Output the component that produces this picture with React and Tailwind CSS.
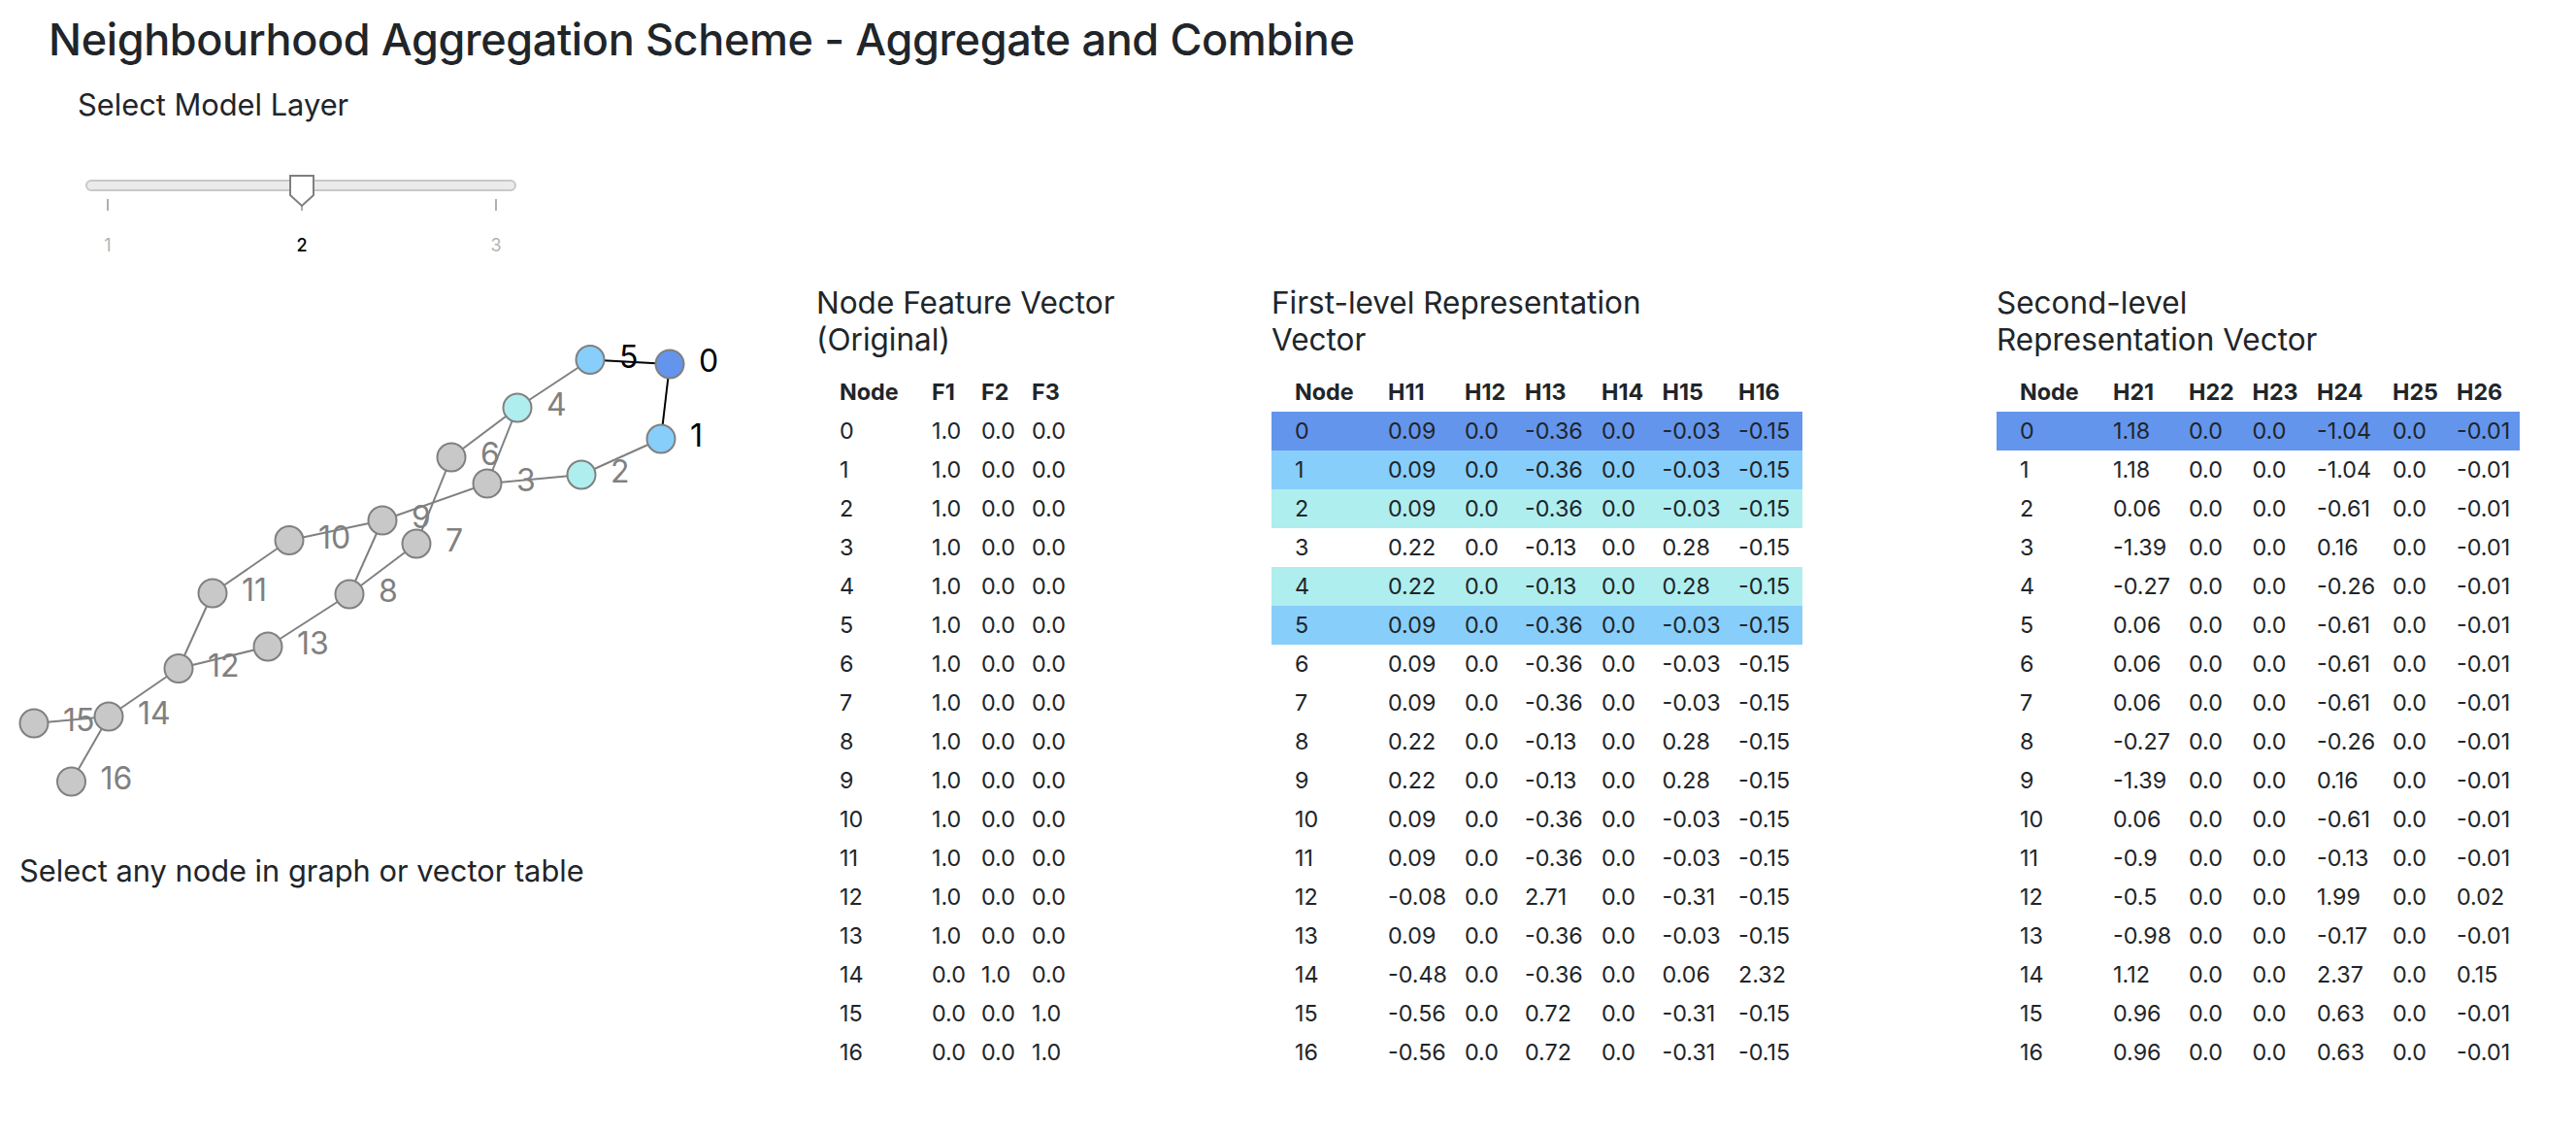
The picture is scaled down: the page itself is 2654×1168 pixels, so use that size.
const nodes = [
  [690, 375, "#6495ed"], [681, 452, "#87cefa"], [599, 489, "#afeeee"], [502, 498], [533, 420, "#afeeee"],
  [608, 370.5, "#87cefa"], [465, 471], [429, 560], [360, 612], [394, 536], [298, 556.5],
  [219, 611], [184, 688.5], [276, 666], [112, 738], [35, 745], [73.5, 805],
];

const edges = [
  [1, 2], [2, 3], [3, 9], [9, 10], [10, 11], [11, 12], [12, 13], [13, 8], [8, 7], [7, 6],
  [6, 4], [4, 3], [4, 5], [9, 8], [12, 14], [14, 15], [14, 16],
];
const activeEdges = [[5, 0], [0, 1]];

const featureRows = Array.from({ length: 17 }, (_, i) => {
  if (i === 14) return ["0.0", "1.0", "0.0"];
  if (i > 14) return ["0.0", "0.0", "1.0"];
  return ["1.0", "0.0", "0.0"];
});

const a = ["0.09", "0.0", "-0.36", "0.0", "-0.03", "-0.15"];
const b = ["0.22", "0.0", "-0.13", "0.0", "0.28", "-0.15"];
const c = ["-0.56", "0.0", "0.72", "0.0", "-0.31", "-0.15"];
const firstRows = [
  a, a, a, b, b, a, a, a, b, b, a, a,
  ["-0.08", "0.0", "2.71", "0.0", "-0.31", "-0.15"],
  a,
  ["-0.48", "0.0", "-0.36", "0.0", "0.06", "2.32"],
  c, c,
];

const row2 = (h1, h4, h6 = "-0.01") => [h1, "0.0", "0.0", h4, "0.0", h6];
const secondRows = [
  row2("1.18", "-1.04"), row2("1.18", "-1.04"), row2("0.06", "-0.61"), row2("-1.39", "0.16"),
  row2("-0.27", "-0.26"), row2("0.06", "-0.61"), row2("0.06", "-0.61"), row2("0.06", "-0.61"),
  row2("-0.27", "-0.26"), row2("-1.39", "0.16"), row2("0.06", "-0.61"), row2("-0.9", "-0.13"),
  row2("-0.5", "1.99", "0.02"), row2("-0.98", "-0.17"), row2("1.12", "2.37", "0.15"),
  row2("0.96", "0.63"), row2("0.96", "0.63"),
];

const rowColors = {
  first: { 0: "bg-[#6495ed]", 1: "bg-[#87cefa]", 2: "bg-[#afeeee]", 4: "bg-[#afeeee]", 5: "bg-[#87cefa]" },
  second: { 0: "bg-[#6495ed]" },
};

function VectorTable({ head, rows, widths, colors = {}, className }) {
  return (
    <table className={`table-fixed border-collapse text-[23.3px] leading-[40px] ${className}`}>
      <colgroup>
        {widths.map((w, i) => (
          <col key={i} style={{ width: w }} />
        ))}
      </colgroup>
      <thead>
        <tr className="h-[40px] text-left">
          <th className="pl-[24px] font-bold">Node</th>
          {head.map((h) => (
            <th key={h} className="font-bold">{h}</th>
          ))}
        </tr>
      </thead>
      <tbody>
        {rows.map((r, i) => (
          <tr key={i} className={`h-[40px] ${colors[i] || ""}`}>
            <td className="pl-[24px]">{i}</td>
            {r.map((v, j) => (
              <td key={j} className="whitespace-nowrap">{v}</td>
            ))}
          </tr>
        ))}
      </tbody>
    </table>
  );
}

function Graph() {
  return (
    <svg viewBox="0 293 841 585" className="block w-[841px] h-[585px]">
      {edges.map(([s, t]) => (
        <line key={s + "-" + t} x1={nodes[s][0]} y1={nodes[s][1]} x2={nodes[t][0]} y2={nodes[t][1]} stroke="#808080" strokeWidth="2" />
      ))}
      {activeEdges.map(([s, t]) => (
        <line key={s + "-" + t} x1={nodes[s][0]} y1={nodes[s][1]} x2={nodes[t][0]} y2={nodes[t][1]} stroke="#000" strokeWidth="2" />
      ))}
      {nodes.map(([x, y, fill], i) => (
        <g key={i}>
          <circle cx={x} cy={y} r="14.5" fill={fill || "#c8c8c8"} stroke="#808080" strokeWidth="2" />
          <text x={x + 30} y={y + 8} fontSize="32" fill={i === 0 || i === 1 || i === 5 ? "#000" : "#808080"}>{i}</text>
        </g>
      ))}
    </svg>
  );
}

function Slider() {
  return (
    <div className="ml-[88px] w-[444px]">
      <div className="relative mt-[58px] h-[12px] rounded-[6px] border-2 border-[#c8c8c8] bg-[#ebebeb]">
        <svg className="absolute left-[208px] top-[-8px] w-[28px] h-[36px]" viewBox="0 0 28 36">
          <path d="M1 2 H25 V22 L13 33 L1 22 Z" fill="#fff" stroke="#7f7f7f" strokeWidth="2" />
        </svg>
      </div>
      <div className="ml-[3px] mt-[8px] flex w-[440px] justify-between">
        {[1, 2, 3].map((n) => (
          <div key={n} className="flex w-[40px] flex-col items-center">
            <div className="h-[12px] w-[2px] bg-[#b0b0b0]" />
            <div className={`mt-[25px] text-[18px] leading-[22px] ${n === 2 ? "font-medium text-black" : "text-[#b3b3b3]"}`}>{n}</div>
          </div>
        ))}
      </div>
    </div>
  );
}

export default function App() {
  return (
    <div className="w-[2654px] h-[1168px] overflow-hidden bg-white text-[#212529] font-['Inter','Liberation_Sans',sans-serif]">
      <h1 className="ml-[50px] pt-[14px] text-[45px] leading-[54px] font-[550] tracking-[-0.38px]">
        Neighbourhood Aggregation Scheme - Aggregate and Combine
      </h1>
      <div className="ml-[80px] mt-[21px] text-[30.8px] leading-[38px]">Select Model Layer</div>
      <Slider />

      <div className="mt-[29px] flex">
        {/* Graph */}
        <div className="w-[841px] shrink-0">
          <Graph />
          <p className="ml-[20px] text-[30.8px] leading-[38px]">Select any node in graph or vector table</p>
        </div>

        {/* Feature vector */}
        <div className="w-[469px] shrink-0">
          <h5 className="text-[31.5px] leading-[38px] font-normal">
            Node Feature Vector
            <br />
            (Original)
          </h5>
          <VectorTable
            className="mt-[15px] w-[264px]"
            head={["F1", "F2", "F3"]}
            rows={featureRows}
            widths={["119px", "51px", "52px", "42px"]}
          />
        </div>

        {/* First level */}
        <div className="w-[747px] shrink-0">
          <h5 className="text-[31.5px] leading-[38px] font-normal">
            First-level Representation
            <br />
            Vector
          </h5>
          <VectorTable
            className="mt-[15px] w-[547px]"
            head={["H11", "H12", "H13", "H14", "H15", "H16"]}
            rows={firstRows}
            widths={["120px", "79px", "62px", "79px", "62.5px", "78.5px", "66px"]}
            colors={rowColors.first}
          />
        </div>

        {/* Second level */}
        <div className="w-[539px] shrink-0">
          <h5 className="text-[31.5px] leading-[38px] font-normal">
            Second-level
            <br />
            Representation Vector
          </h5>
          <VectorTable
            className="mt-[15px] w-[539px]"
            head={["H21", "H22", "H23", "H24", "H25", "H26"]}
            rows={secondRows}
            widths={["120px", "78px", "65.5px", "66.5px", "78px", "66px", "65px"]}
            colors={rowColors.second}
          />
        </div>
      </div>
    </div>
  );
}
